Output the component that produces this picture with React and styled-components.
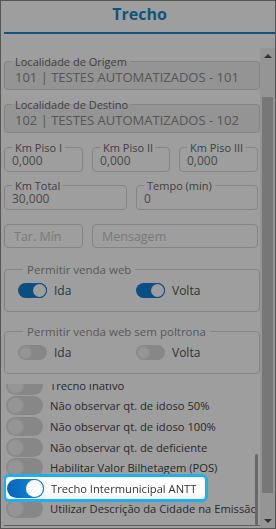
import React from "react";
import styled, { createGlobalStyle } from "styled-components";

const Global = createGlobalStyle`
  html, body { margin: 0; padding: 0; background: #fff; }
  body { font-family: "Open Sans", "Liberation Sans", sans-serif; }
  * { box-sizing: border-box; }
`;

const Panel = styled.div`
  width: 276px;
  height: 529px;
  border: 1px solid #8a8a8a;
  background: #fff;
  display: flex;
  flex-direction: column;
  overflow: hidden;
`;

const Header = styled.div`
  flex: none;
  height: 47px;
  padding-left: 3px;
  display: flex;
  flex-direction: column;
`;

const Title = styled.h1`
  margin: 0;
  height: 31px;
  display: flex;
  align-items: center;
  justify-content: center;
  font-size: 16px;
  font-weight: 700;
  color: #1a86cf;
  padding-bottom: 5px;
`;

const TitleRule = styled.div`
  height: 2px;
  background: #1a86cf;
`;

const Body = styled.div`
  flex: 1;
  min-height: 0;
  display: flex;
`;

const Content = styled.div`
  flex: 1;
  min-width: 0;
  overflow: hidden;
  padding: 6.5px 0 0 3px;
  display: flex;
  flex-direction: column;
  gap: 7.5px;
`;

const Scrollbar = styled.div`
  flex: none;
  width: 15px;
  background: #f1f1f1;
  display: flex;
  flex-direction: column;
`;

const ArrowButton = styled.div`
  height: 15px;
  flex: none;
  display: flex;
  align-items: center;
  justify-content: center;
  &::before {
    content: "";
    border-left: 4px solid transparent;
    border-right: 4px solid transparent;
    ${(p) =>
      p.$down
        ? "border-top: 4px solid #505050;"
        : "border-bottom: 4px solid #505050;"}
  }
`;

const Track = styled.div`
  flex: 1;
  padding: 34px 2px 20px;
  display: flex;
`;

const Thumb = styled.div`
  flex: 1;
  background: #c1c1c1;
`;

const Field = styled.fieldset`
  margin: 0;
  min-width: 0;
  border: 1px solid #d6d6d6;
  border-radius: 4px;
  padding: 0 7px ${(p) => (p.$large ? "3.5px" : "3px")} ${(p) => (p.$large ? "10px" : "7px")};
  background: ${(p) => (p.$disabled ? "#efefef" : "#fff")};
`;

const Legend = styled.legend`
  font-size: 11px;
  line-height: 13px;
  color: #686868;
  padding: 0 3px;
  margin-left: ${(p) => (p.$large ? "-3px" : "0")};
  white-space: nowrap;
`;

const Value = styled.div`
  font-size: ${(p) => (p.$large ? "13px" : "12px")};
  line-height: ${(p) => (p.$large ? "18px" : "14px")};
  color: ${(p) => (p.$muted ? "#8a8a8a" : "#777")};
  white-space: nowrap;
`;

const Row3 = styled.div`
  display: grid;
  grid-template-columns: 79px 78px 79px;
  gap: 9px;
`;

const Row2 = styled.div`
  display: grid;
  grid-template-columns: 123px 122px;
  gap: 9px;
`;

const InputRow = styled.div`
  display: grid;
  grid-template-columns: 79px 166px;
  gap: 9px;
  margin-top: 6.5px;
`;

const Input = styled.div`
  height: 24px;
  border: 1px solid #d6d6d6;
  border-radius: 4px;
  padding: 0 9px;
  display: flex;
  align-items: center;
  font-size: 12.5px;
  color: #c4c4c4;
`;

const Group = styled.fieldset`
  margin: ${(p) => (p.$first ? "6px" : "5px")} 0 0;
  min-width: 0;
  border: 1px solid #d6d6d6;
  border-radius: 4px;
  padding: 5px 10px 12px 13px;
  display: grid;
  grid-template-columns: 118px 1fr;
`;

const GroupLegend = styled.legend`
  font-size: 11.5px;
  line-height: 15px;
  color: #8f8f8f;
  padding: 0 4px;
  margin-left: 5px;
`;

const SwitchItem = styled.div`
  display: flex;
  align-items: center;
  gap: 7px;
  font-size: 12px;
  color: #555;
`;

const Toggle = styled.span`
  position: relative;
  flex: none;
  width: ${(p) => (p.$big ? "37px" : "29px")};
  height: ${(p) => (p.$big ? "19px" : "15px")};
  border-radius: 10px;
  background: ${(p) =>
    p.$on
      ? p.$big
        ? "linear-gradient(90deg, #0767b8, #1487df)"
        : "#0f80d6"
      : "#dadada"};
  &::after {
    content: "";
    position: absolute;
    top: 1px;
    ${(p) => (p.$on ? "right: 1px;" : "left: 1px;")}
    width: ${(p) => (p.$big ? "17px" : "13px")};
    height: ${(p) => (p.$big ? "17px" : "13px")};
    border-radius: 50%;
    background: ${(p) => (p.$on ? "#fff" : "#f0f0f0")};
    box-shadow: ${(p) =>
      p.$on ? "0 0 0 1px #0f7fd4" : "inset 0 0 0 1px #e2e2e2"};
  }
`;

const List = styled.div`
  position: relative;
  margin-top: 2px;
  height: 142px;
  flex: none;
  overflow: hidden;
  border-bottom: 1px solid #9a9a9a;
  display: flex;
  flex-direction: column;
  align-items: flex-start;
`;

const ListInner = styled.div`
  margin-top: -8.5px;
  display: flex;
  flex-direction: column;
  align-items: flex-start;
`;

const ListRow = styled.div`
  position: relative;
  display: inline-flex;
  align-items: center;
  gap: 7px;
  height: 20.6px;
  padding: 0 9px 0 2px;
  font-size: 11.2px;
  color: #444;
  white-space: nowrap;
  ${(p) =>
    p.$highlight &&
    `
    z-index: 20;
    height: 22px;
    margin: -0.7px 0 -0.7px 2px;
    padding: 0 9px 0 1px;
    background: #fff;
    border-radius: 3px;
    color: #333;
    box-shadow: 0 0 0 3px #1cb0ef, inset 0 -3px 4px rgba(0,0,0,0.06);
  `}
`;

const MiniThumb = styled.div`
  position: absolute;
  right: 2px;
  top: 70px;
  bottom: 0;
  width: 3px;
  border-radius: 2px;
  background: #a8a8a8;
`;

const NextSection = styled.div`
  font-size: 12px;
  color: #444;
  padding-left: 6px;
  margin-top: -6px;
`;

const Overlay = styled.div`
  position: fixed;
  inset: 0;
  background: rgba(0, 0, 0, 0.38);
  z-index: 10;
  pointer-events: none;
`;

const TextField = ({ label, value, large, disabled, muted }) => (
  <Field $large={large} $disabled={disabled}>
    <Legend $large={large}>{label}</Legend>
    <Value $large={large} $muted={muted}>{value}</Value>
  </Field>
);

const Switch = ({ on, label }) => (
  <SwitchItem>
    <Toggle $on={on} />
    {label}
  </SwitchItem>
);

const items = [
  "Trecho Inativo",
  "Não observar qt. de idoso 50%",
  "Não observar qt. de idoso 100%",
  "Não observar qt. de deficiente",
  "Habilitar Valor Bilhetagem (POS)",
  "Trecho Intermunicipal ANTT",
  "Utilizar Descrição da Cidade na Emissão",
];

export default function App() {
  return (
    <>
      <Global />
      <Panel>
        <Header>
          <Title>Trecho</Title>
          <TitleRule />
        </Header>
        <Body>
          <Content>
            <TextField
              large
              disabled
              muted
              label="Localidade de Origem"
              value="101 | TESTES AUTOMATIZADOS - 101"
            />
            <TextField
              large
              disabled
              muted
              label="Localidade de Destino"
              value="102 | TESTES AUTOMATIZADOS - 102"
            />
            <Row3>
              <TextField label="Km Piso I" value="0,000" />
              <TextField label="Km Piso II" value="0,000" />
              <TextField label="Km Piso III" value="0,000" />
            </Row3>
            <Row2>
              <TextField label="Km Total" value="30,000" />
              <TextField label="Tempo (min)" value="0" />
            </Row2>
            <InputRow>
              <Input>Tar. Mín</Input>
              <Input>Mensagem</Input>
            </InputRow>
            <Group $first>
              <GroupLegend>Permitir venda web</GroupLegend>
              <Switch on label="Ida" />
              <Switch on label="Volta" />
            </Group>
            <Group>
              <GroupLegend>Permitir venda web sem poltrona</GroupLegend>
              <Switch label="Ida" />
              <Switch label="Volta" />
            </Group>
            <List>
              <ListInner>
                {items.map((t) => {
                  const hl = t === "Trecho Intermunicipal ANTT";
                  return (
                    <ListRow key={t} $highlight={hl}>
                      <Toggle $big $on={hl} />
                      {t}
                    </ListRow>
                  );
                })}
              </ListInner>
              <MiniThumb />
            </List>
            <NextSection>Pagamentos</NextSection>
          </Content>
          <Scrollbar>
            <ArrowButton />
            <Track>
              <Thumb />
            </Track>
            <ArrowButton $down />
          </Scrollbar>
        </Body>
      </Panel>
      <Overlay />
    </>
  );
}
